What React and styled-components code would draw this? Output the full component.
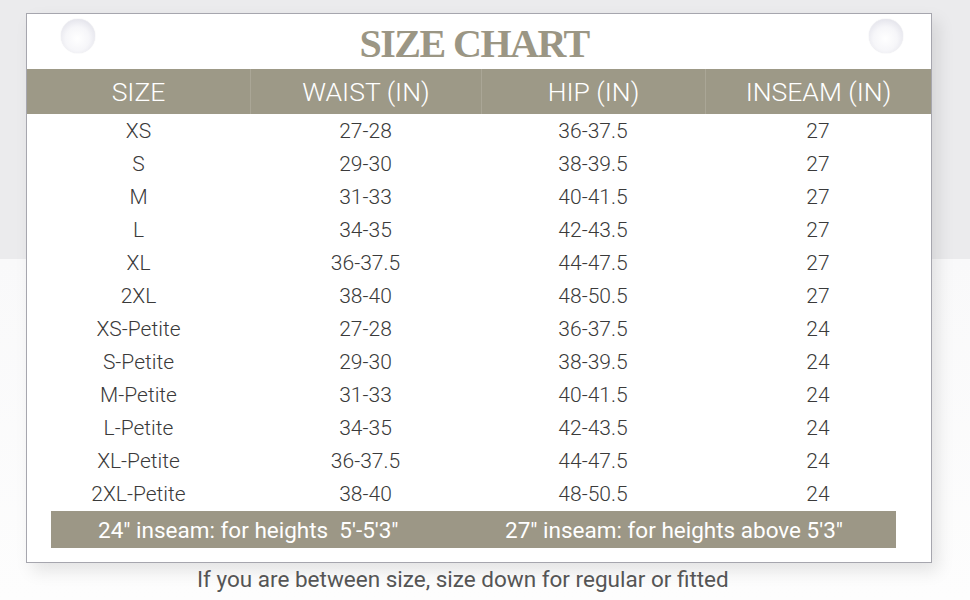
import React from "react";
import styled, { createGlobalStyle } from "styled-components";

const GlobalStyle = createGlobalStyle`
  html, body {
    margin: 0;
    padding: 0;
  }
  body {
    width: 970px;
    height: 600px;
    overflow: hidden;
    background: linear-gradient(#ebebed 0, #ebebed 259px, #f9f9fa 259px, #fdfdfd 600px);
    font-family: Roboto, "Liberation Sans", sans-serif;
  }
`;

const Page = styled.div`
  padding: 13px 0 0 26px;
`;

const Card = styled.div`
  box-sizing: border-box;
  width: 906px;
  height: 550px;
  background: #fff;
  border: 1px solid #a6a6ae;
  box-shadow: 6px 8px 16px rgba(0, 0, 0, 0.1);
  display: flex;
  flex-direction: column;
`;

const TitleRow = styled.div`
  height: 55px;
  display: flex;
  align-items: center;
  justify-content: space-between;
  padding: 0 28px 0 34px;
`;

const Pin = styled.div`
  width: 34px;
  height: 34px;
  border-radius: 50%;
  margin-top: -12px;
  background: radial-gradient(
    circle at 48% 58%,
    #ffffff 0%,
    #f6f6f9 45%,
    #e2e2ea 80%,
    #cfcfd9 100%
  );
  box-shadow: 0 0 1px rgba(120, 120, 140, 0.4);
`;

const Title = styled.h1`
  margin: 0 16px 0 0;
  font-family: "Liberation Serif", "Times New Roman", serif;
  font-weight: 700;
  font-size: 40px;
  letter-spacing: -1.5px;
  line-height: 1;
  color: #9b9684;
  padding-top: 4px;
`;

const Grid = styled.div`
  display: grid;
  grid-template-columns: 223px 231px 224px 1fr;
`;

const HeadCell = styled.div`
  height: 45px;
  background: #9d9987;
  color: #fff;
  font-weight: 300;
  font-size: 26.5px;
  display: flex;
  align-items: center;
  justify-content: center;
  border-left: ${(p) => (p.first ? "none" : "1px solid #aaa696")};
`;

const Cell = styled.div`
  height: 33px;
  display: flex;
  align-items: center;
  justify-content: center;
  font-weight: 300;
  font-size: 21px;
  color: #3a3a3a;
`;

const Note = styled.div`
  margin: 1px 35px 0 24px;
  height: 37px;
  background: #9c9786;
  display: grid;
  grid-template-columns: 422px 1fr;
  align-items: center;
  color: #fff;
  font-size: 22.5px;
`;

const NoteText = styled.span`
  padding-left: ${(p) => p.pad}px;
  white-space: pre;
`;

const Caption = styled.div`
  padding: 3px 0 0 171px;
  font-size: 22.5px;
  color: #555;
`;

const rows = [
  ["XS", "27-28", "36-37.5", "27"],
  ["S", "29-30", "38-39.5", "27"],
  ["M", "31-33", "40-41.5", "27"],
  ["L", "34-35", "42-43.5", "27"],
  ["XL", "36-37.5", "44-47.5", "27"],
  ["2XL", "38-40", "48-50.5", "27"],
  ["XS-Petite", "27-28", "36-37.5", "24"],
  ["S-Petite", "29-30", "38-39.5", "24"],
  ["M-Petite", "31-33", "40-41.5", "24"],
  ["L-Petite", "34-35", "42-43.5", "24"],
  ["XL-Petite", "36-37.5", "44-47.5", "24"],
  ["2XL-Petite", "38-40", "48-50.5", "24"],
];

const headers = ["SIZE", "WAIST (IN)", "HIP (IN)", "INSEAM (IN)"];

export default function App() {
  return (
    <>
      <GlobalStyle />
      <Page>
        <Card>
          <TitleRow>
            <Pin />
            <Title>SIZE CHART</Title>
            <Pin />
          </TitleRow>
          <Grid>
            {headers.map((h, i) => (
              <HeadCell key={h} first={i === 0}>
                {h}
              </HeadCell>
            ))}
            {rows.map((r) =>
              r.map((c, i) => <Cell key={r[0] + i}>{c}</Cell>)
            )}
          </Grid>
          <Note>
            <NoteText pad={47}>{'24" inseam: for heights  5\'-5\'3"'}</NoteText>
            <NoteText pad={32}>{'27" inseam: for heights above 5\'3"'}</NoteText>
          </Note>
        </Card>
        <Caption>If you are between size, size down for regular or fitted</Caption>
      </Page>
    </>
  );
}
